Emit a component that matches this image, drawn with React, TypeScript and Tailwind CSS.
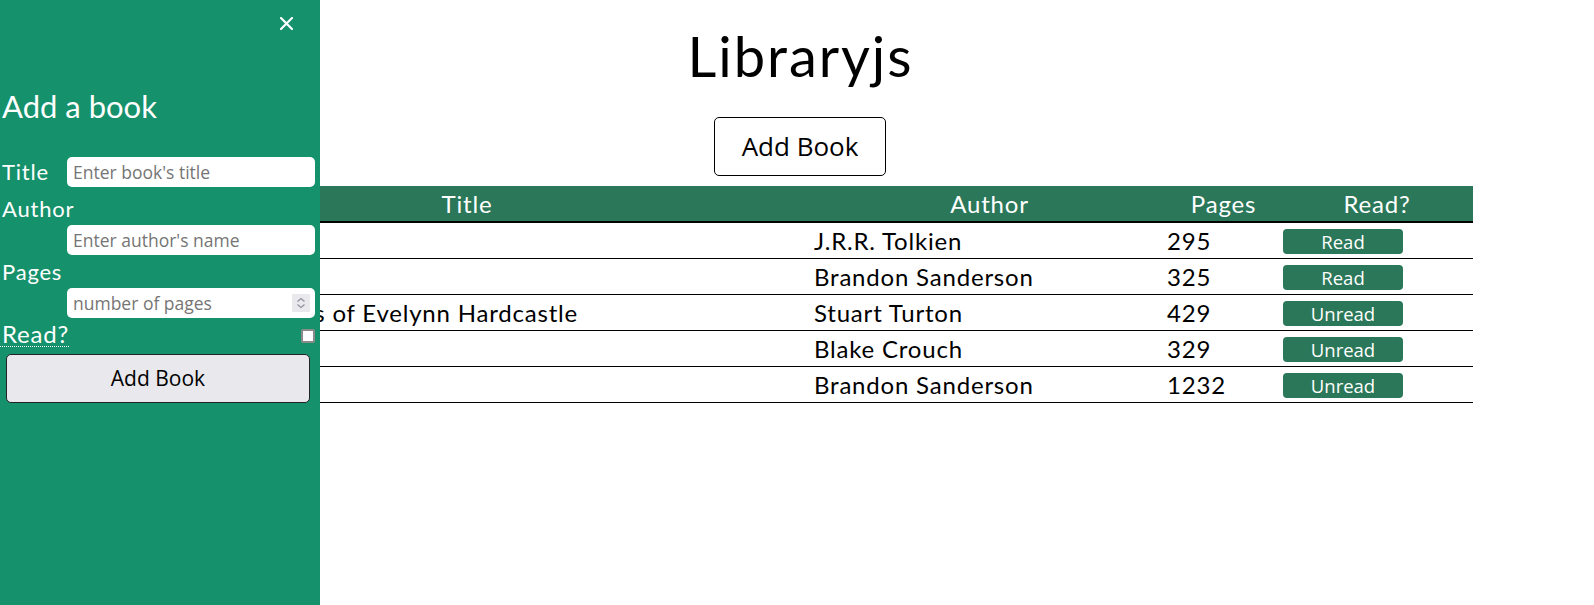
const books = [
  { title: "The Hobbit", author: "J.R.R. Tolkien", pages: 295, read: true },
  { title: "Elantris", author: "Brandon Sanderson", pages: 325, read: true },
  {
    title: "The Seven Deaths of Evelynn Hardcastle",
    author: "Stuart Turton",
    pages: 429,
    read: false,
  },
  { title: "Recursion", author: "Blake Crouch", pages: 329, read: false },
  { title: "Rhythm of War", author: "Brandon Sanderson", pages: 1232, read: false },
];

const cols = "grid grid-cols-[692px_353px_115px_192px]";

function TextField({ placeholder, spinner }: { placeholder: string; spinner?: boolean }) {
  return (
    <div className="flex h-[30px] w-[248px] items-center rounded-[5px] bg-white pl-[6px] pr-[5px]">
      <input
        type="text"
        placeholder={placeholder}
        className="min-w-0 flex-1 bg-transparent font-['Open_Sans',sans-serif] text-[17.5px] tracking-normal text-black outline-none placeholder:text-[#757575]"
      />
      {spinner && (
        <svg width="18" height="18" viewBox="0 0 18 18" className="shrink-0">
          <rect width="18" height="18" fill="#e9e9ed" />
          <path d="M5.5 7.5 L9 4.5 L12.5 7.5" fill="none" stroke="#8f8f9d" strokeWidth="1.2" />
          <path d="M5.5 10.5 L9 13.5 L12.5 10.5" fill="none" stroke="#8f8f9d" strokeWidth="1.2" />
        </svg>
      )}
    </div>
  );
}

function Sidebar() {
  return (
    <aside className="fixed left-0 top-0 flex h-screen w-[320px] flex-col bg-[#15916b] text-white">
      <div className="flex justify-end pr-[27px] pt-[17px]">
        <svg width="13" height="13" viewBox="0 0 13 13">
          <path d="M1 1 L12 12 M12 1 L1 12" stroke="white" strokeWidth="2.2" strokeLinecap="round" />
        </svg>
      </div>

      <h2 className="mt-[58px] pl-[2px] text-[31px] leading-[1.2] tracking-normal">Add a book</h2>

      <div className="mt-[32px] flex h-[30px] items-center justify-between pr-[5px]">
        <label className="pl-[2px] text-[22px] leading-[26px]">Title</label>
        <TextField placeholder="Enter book's title" />
      </div>

      <label className="mt-[9px] h-[26px] pl-[2px] text-[22px] leading-[26px]">Author</label>
      <div className="mt-[3px] flex justify-end pr-[5px]">
        <TextField placeholder="Enter author's name" />
      </div>

      <label className="mt-[4px] h-[26px] pl-[2px] text-[22px] leading-[26px]">Pages</label>
      <div className="mt-[3px] flex justify-end pr-[5px]">
        <TextField placeholder="number of pages" spinner />
      </div>

      <div className="mt-[3px] flex h-[26px] items-start justify-between pr-[5px]">
        <span className="border-b border-dotted border-white pl-[2px] text-[24px] leading-[25px]">
          Read?
        </span>
        <span className="mt-[8px] h-[14px] w-[14px] rounded-[2px] border-2 border-[#8a8a8a] bg-white" />
      </div>

      <button className="ml-[6px] mt-[7px] h-[49px] w-[304px] rounded-[5px] border border-[#222] bg-[#e9e9ed] font-['Open_Sans',sans-serif] text-[21px] tracking-normal text-black">
        Add Book
      </button>
    </aside>
  );
}

export default function App() {
  return (
    <div className="relative min-h-screen bg-white font-['Lato',sans-serif] tracking-wider text-black">
      <main className="flex flex-col items-center">
        <h1 className="ml-[7px] mt-[22px] text-[56px] leading-[1.2] tracking-[0.035em]">Libraryjs</h1>

        <button className="ml-[6px] mt-[28px] h-[59px] w-[172px] rounded-[5px] border border-black bg-white font-['Open_Sans',sans-serif] text-[26px] tracking-normal">
          Add Book
        </button>

        <div className="mt-[10px] w-[1352px] text-[24px]">
          <div className={`${cols} h-[37px] items-center border-b-2 border-black bg-[#2a7759] text-center text-white`}>
            <span>Title</span>
            <span>Author</span>
            <span>Pages</span>
            <span>Read?</span>
          </div>

          {books.map((book) => (
            <div key={book.title} className={`${cols} h-[36px] items-center border-b border-black`}>
              <span className="truncate px-px">{book.title}</span>
              <span className="px-px">{book.author}</span>
              <span className="px-px">{book.pages}</span>
              <span className="flex px-[2px] pt-px">
                <button className="h-[25px] w-[120px] rounded-[4px] bg-[#2a7759] font-['Open_Sans',sans-serif] text-[18.5px] leading-[25px] tracking-normal text-white">
                  {book.read ? "Read" : "Unread"}
                </button>
              </span>
            </div>
          ))}
        </div>
      </main>

      <Sidebar />
    </div>
  );
}
